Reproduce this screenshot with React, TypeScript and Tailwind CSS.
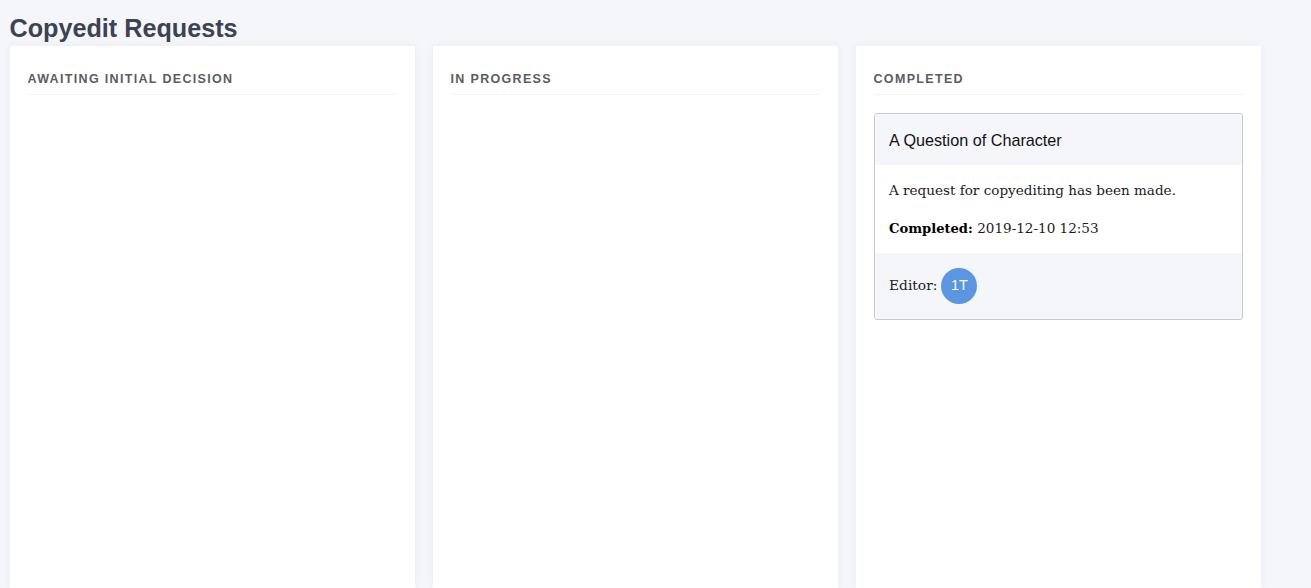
import React from 'react';

const Column: React.FC<{ title: string; children?: React.ReactNode }> = ({ title, children }) => (
  <section className="w-[405px] h-[542px] shrink-0 bg-white px-[18px] pt-[25px] shadow-[0_0_8px_rgba(60,70,110,0.06)]">
    <h2 className="h-[24px] -ml-[0.5px] border-b border-[#f2f3f5] text-[12.5px] leading-[16px] font-bold tracking-[1.33px] uppercase text-[#5c5c60]">
      {title}
    </h2>
    {children}
  </section>
);

export default function App() {
  return (
    <div className="h-[588px] overflow-hidden bg-[#f5f6fa] pl-[10px] font-['Liberation_Sans',sans-serif]">
      <h1 className="h-[46px] -ml-[0.5px] pt-[12px] text-[25.2px] leading-[32px] font-bold text-[#3c4354]">Copyedit Requests</h1>
      <div className="flex gap-[18px]">
        <Column title="Awaiting Initial Decision" />
        <Column title="In Progress" />
        <Column title="Completed">
          <article className="mt-[18px] h-[207px] overflow-hidden rounded-[3px] border border-[#c8c9cc]">
            <header className="h-[51px] -ml-[0.5px] bg-[#f5f6fa] pl-[14.5px] text-[16.2px] leading-[53px] text-[#111]">
              A Question of Character
            </header>
            <div className="h-[88px] px-[14px] pt-[15px] font-['DejaVu_Serif',serif] text-[13.55px] text-[#1b1b1b]">
              <p className="leading-[21px]">A request for copyediting has been made.</p>
              <p className="mt-[17px] leading-[21px]">
                <strong className="text-[13.1px] font-bold text-black">Completed:</strong> 2019-12-10 12:53
              </p>
            </div>
            <footer className="flex h-[66px] items-center gap-[4px] bg-[#f5f6fa] px-[14px] font-['DejaVu_Serif',serif] text-[13.8px] text-[#1b1b1b]">
              <span className="-mt-[2px]">Editor:</span>
              <span className="flex h-[36px] w-[36px] items-center justify-center rounded-full bg-[#5b96e2] font-['Liberation_Sans',sans-serif] text-[14.5px] text-white">
                1T
              </span>
            </footer>
          </article>
        </Column>
      </div>
    </div>
  );
}
